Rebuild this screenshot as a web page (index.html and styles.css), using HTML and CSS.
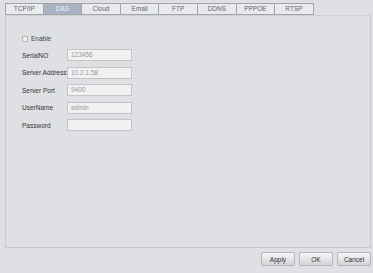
FILE: index.html
```html
<!DOCTYPE html>
<html lang="en">
<head>
    <meta charset="UTF-8">
    <title>DAS Settings</title>
    <link rel="stylesheet" href="styles.css">
</head>
<body>
    <div class="page">
        <div class="tabs">
            <div class="tab">TCP/IP</div>
            <div class="tab active">DAS</div>
            <div class="tab">Cloud</div>
            <div class="tab">Email</div>
            <div class="tab">FTP</div>
            <div class="tab">DDNS</div>
            <div class="tab">PPPOE</div>
            <div class="tab">RTSP</div>
        </div>

        <div class="panel">
            <label class="enable"><span class="check"></span>Enable</label>
            <div class="form">
                <div class="form-label">SerialNO</div>
                <div class="input">123456</div>
                <div class="form-label">Server Address</div>
                <div class="input">10.2.1.58</div>
                <div class="form-label">Server Port</div>
                <div class="input">9400</div>
                <div class="form-label">UserName</div>
                <div class="input">admin</div>
                <div class="form-label">Password</div>
                <div class="input"></div>
            </div>
        </div>

        <div class="actions">
            <button class="btn">Apply</button>
            <button class="btn">OK</button>
            <button class="btn">Cancel</button>
        </div>
    </div>
</body>
</html>
```
FILE: styles.css
```css
* {
    margin: 0;
    padding: 0;
    box-sizing: border-box;
}

body {
    font-family: 'Liberation Sans', Arial, sans-serif;
    font-size: 6.5px;
    background-color: #dfe0e4;
    color: #333;
}

.page {
    padding: 3px 2px 0 5px;
}

.tabs {
    display: flex;
    height: 12px;
}

.tab {
    width: 38.6px;
    height: 12px;
    line-height: 10px;
    text-align: center;
    background-color: #e9eaed;
    border: 1px solid #a3a5aa;
    border-left: none;
    color: #666;
}

.tab:first-child {
    border-left: 1px solid #a3a5aa;
}

.tab.active {
    background-color: #a8b3c3;
    color: #eef1f5;
}

.panel {
    height: 233px;
    border: 1px solid #c8c9ce;
    border-top-color: #cfd0d4;
    padding: 18px 0 0 16px;
}

.enable {
    display: flex;
    align-items: center;
    height: 9px;
    color: #444;
}

.check {
    width: 6px;
    height: 6px;
    border: 1px solid #b8b9bd;
    background-color: #eeeff1;
    margin-right: 3px;
}

.form {
    display: grid;
    grid-template-columns: 45px 65px;
    grid-auto-rows: 12px;
    row-gap: 5.5px;
    align-items: center;
    margin-top: 6px;
}

.form-label {
    color: #333;
}

.input {
    height: 12px;
    line-height: 10px;
    padding-left: 3px;
    border: 1px solid #c3c4c8;
    background-color: #f1f1f2;
    color: #9a9a9a;
}

.actions {
    display: flex;
    justify-content: flex-end;
    gap: 4px;
    margin-top: 4px;
}

.btn {
    width: 34px;
    height: 14px;
    font-family: inherit;
    font-size: 6.5px;
    color: #333;
    border: 1px solid #b5b6ba;
    border-radius: 2px;
    background: linear-gradient(#f6f6f7, #d2d3d6);
}
```
